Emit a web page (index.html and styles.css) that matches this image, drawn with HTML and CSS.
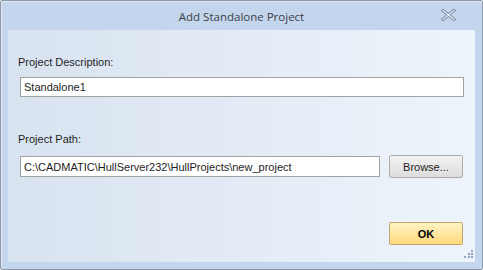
FILE: index.html
```html
<!DOCTYPE html>
<html lang="en">
<head>
    <meta charset="UTF-8">
    <meta name="viewport" content="width=device-width, initial-scale=1.0">
    <title>Add Standalone Project</title>
    <link rel="stylesheet" href="styles.css">
</head>
<body>
    <div class="window">
        <div class="titlebar">
            <span class="title">Add Standalone Project</span>
            <span class="close">
                <svg width="15" height="12" viewBox="0 0 15 12">
                    <path d="M2 1.5 L13 10.5 M13 1.5 L2 10.5" stroke="#7f8fa6" stroke-width="3.2" stroke-linecap="square"/>
                    <path d="M2 1.5 L13 10.5 M13 1.5 L2 10.5" stroke="#e8eef7" stroke-width="1.2" stroke-linecap="square"/>
                </svg>
            </span>
        </div>
        <div class="content">
            <label class="field-label" for="desc">Project Description:</label>
            <input class="text-input" id="desc" type="text" value="Standalone1">

            <label class="field-label second" for="path">Project Path:</label>
            <div class="path-row">
                <input class="text-input path-input" id="path" type="text" value="C:\CADMATIC\HullServer232\HullProjects\new_project">
                <button class="btn browse" type="button">Browse...</button>
            </div>

            <div class="footer">
                <button class="btn ok" type="button">OK</button>
            </div>

            <span class="grip">
                <svg width="11" height="11" viewBox="0 0 11 11">
                    <rect x="8" y="0" width="2" height="2" fill="#8da2bc"/>
                    <rect x="5" y="3" width="2" height="2" fill="#8da2bc"/>
                    <rect x="8" y="3" width="2" height="2" fill="#8da2bc"/>
                    <rect x="1" y="6" width="2" height="2" fill="#8da2bc"/>
                    <rect x="5" y="6" width="2" height="2" fill="#8da2bc"/>
                    <rect x="8" y="6" width="2" height="2" fill="#8da2bc"/>
                </svg>
            </span>
        </div>
    </div>
</body>
</html>
```

FILE: styles.css
```css
body {
    margin: 0;
    font-family: "Liberation Sans", Arial, sans-serif;
    font-size: 11px;
    color: #1e1e1e;
    background: #ffffff;
}
.window {
    width: 483px;
    height: 270px;
    box-sizing: border-box;
    border: 1px solid #8c98a8;
    border-radius: 2px;
    background-color: #c4d6ed;
    box-shadow: inset 1px 1px 0 #dde7f4;
    display: flex;
    flex-direction: column;
}
.titlebar {
    position: relative;
    height: 29px;
    display: flex;
    align-items: center;
    justify-content: center;
}
.title {
    font-family: "Open Sans", "Liberation Sans", sans-serif;
    font-size: 11.5px;
    color: #3b3f46;
    margin-top: 2px;
}
.close {
    position: absolute;
    right: 26px;
    top: 8px;
    line-height: 0;
}
.content {
    position: relative;
    flex: 1;
    margin: 0 7px 7px 7px;
    padding: 25px 11px 0 10px;
    background: linear-gradient(to right, #d8e3f0, #eef4fb);
}
.field-label {
    display: block;
    line-height: 14px;
    color: #1e1e1e;
}
.field-label.second {
    margin-top: 35px;
}
.text-input {
    display: block;
    box-sizing: border-box;
    width: 444px;
    height: 20px;
    margin: 8px 0 0 2px;
    padding: 0 3px;
    border: 1px solid #a3a3a3;
    background: #ffffff;
    font-family: "Liberation Sans", Arial, sans-serif;
    font-size: 11px;
    color: #1e1e1e;
    outline: none;
}
.path-row {
    display: flex;
    align-items: center;
    margin-top: 9px;
    height: 23px;
}
.path-input {
    margin: 0 0 0 2px;
    width: 360px;
    height: 21px;
}
.btn {
    box-sizing: border-box;
    width: 74px;
    font-family: "Liberation Sans", Arial, sans-serif;
    font-size: 11px;
    color: #1e1e1e;
    border-radius: 2px;
    padding: 0;
    cursor: pointer;
}
.browse {
    height: 23px;
    margin-left: 9px;
    border: 1px solid #acacac;
    background: linear-gradient(to bottom, #f3f3f3, #dcdcdc);
}
.footer {
    display: flex;
    justify-content: flex-end;
    margin-top: 44px;
    padding-right: 1px;
}
.ok {
    height: 23px;
    border: 1px solid #c4a66a;
    background: linear-gradient(to bottom, #fff4c4, #ffd97c);
    font-weight: bold;
    color: #000000;
}
.grip {
    position: absolute;
    right: 1px;
    bottom: 1px;
    line-height: 0;
}
```
